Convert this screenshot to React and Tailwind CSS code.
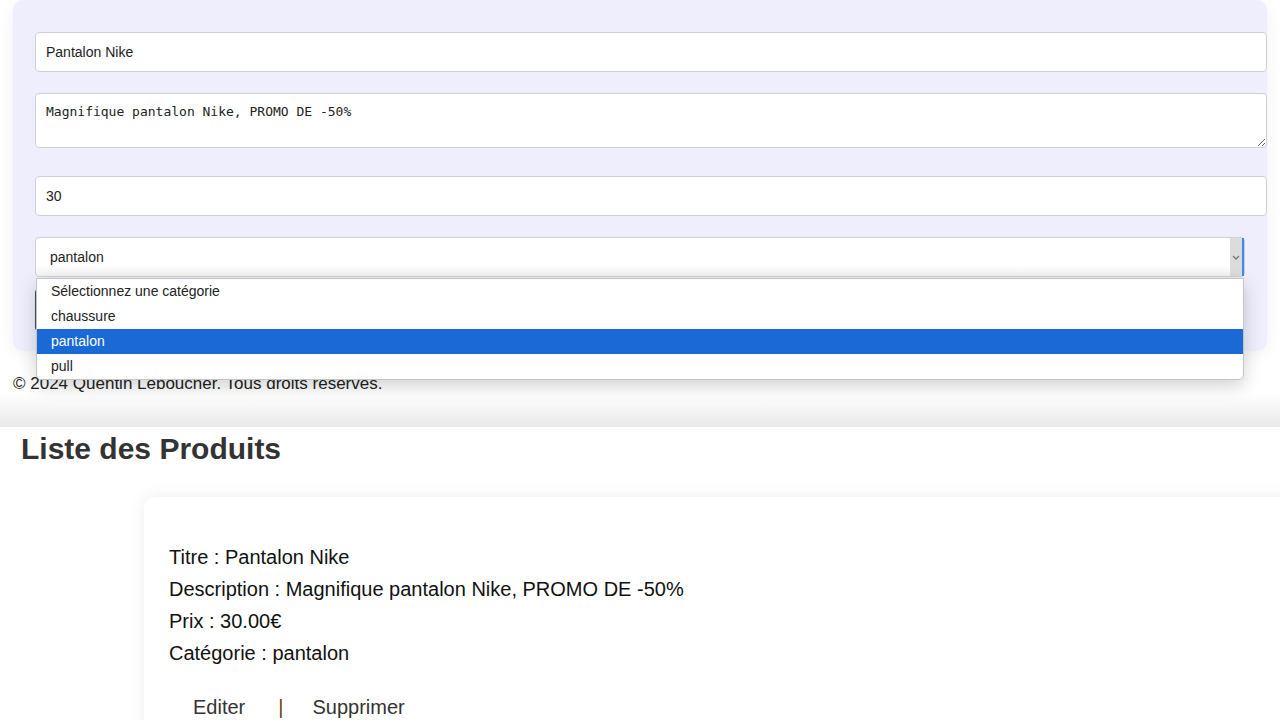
import { useState } from "react";

const categories = ["Sélectionnez une catégorie", "chaussure", "pantalon", "pull"];

export default function App() {
  const [selected] = useState("pantalon");

  return (
    <div className="min-h-screen bg-white font-['Liberation_Sans',Arial,sans-serif] text-[#333]">
      {/* Formulaire */}
      <div className="px-[13px]">
        <div className="bg-[#eeeefc] rounded-[10px] pl-[22px] pr-[22px] pt-[32px] pb-[20px] shadow-[0_4px_16px_rgba(0,0,0,0.06)]">
          <input
            defaultValue="Pantalon Nike"
            className="block w-full box-content h-[38px] px-[10px] border border-[#cfcfd6] rounded-[4px] bg-white text-[14px] text-[#222] outline-none"
          />
          <textarea
            defaultValue="Magnifique pantalon Nike, PROMO DE -50%"
            className="block mt-[21px] w-full box-content h-[33px] px-[10px] py-[10px] border border-[#cfcfd6] rounded-[4px] bg-white font-['DejaVu_Sans_Mono',monospace] text-[13px] leading-[15px] text-[#222] outline-none"
          />
          <input
            defaultValue="30"
            className="block mt-[28px] w-full box-content h-[38px] px-[10px] border border-[#cfcfd6] rounded-[4px] bg-white text-[14px] text-[#222] outline-none"
          />

          {/* Select ouvert */}
          <div className="relative mt-[21px]">
            <div className="flex items-stretch h-[40px] border border-[#cfcfd6] rounded-[4px] bg-gradient-to-b from-white from-70% to-[#f3f3f3]">
              <span className="flex-1 flex items-center pl-[14px] text-[14px] text-[#222]">{selected}</span>
              <span className="w-[14px] flex items-center justify-center bg-[#dcdcdc] border-r-2 border-[#3b8ee8]">
                <svg width="8" height="5" viewBox="0 0 8 5" fill="none">
                  <path d="M1 1l3 3 3-3" stroke="#777" strokeWidth="1.3" />
                </svg>
              </span>
            </div>

            <button className="block mt-[12px] w-[1100px] h-[42px] rounded-[4px] bg-[#3d4f6a] text-white text-[14px]">
              Ajouter
            </button>

            <ul className="absolute left-px right-px top-[41px] z-10 bg-white border border-[#c4c4c4] rounded-b-[5px] shadow-[0_6px_18px_rgba(0,0,0,0.18)] overflow-hidden">
              {categories.map((c) => (
                <li
                  key={c}
                  className={`h-[25px] flex items-center pl-[14px] text-[14px] ${
                    c === selected ? "bg-[#1a69d4] text-white" : "text-[#222]"
                  }`}
                >
                  {c}
                </li>
              ))}
            </ul>
          </div>
        </div>

        <p className="mt-[23px] text-[17px] leading-[20px] text-[#222]">
          © 2024 Quentin Leboucher. Tous droits réservés.
        </p>
      </div>
      <div className="h-[33px] bg-gradient-to-b from-white to-[#e9e9e9]" />

      {/* Liste */}
      <div className="bg-white pt-[4px]">
        <h2 className="pl-[21px] text-[30px] leading-[36px] font-bold text-[#333]">Liste des Produits</h2>

        <div className="mt-[30px] ml-[144px] w-[1200px] bg-white rounded-[10px] shadow-[0_0_18px_rgba(0,0,0,0.07)] pl-[25px] pt-[44px] pb-[20px]">
          <div className="text-[20px] leading-[32px] text-[#111]">
            <p>Titre : Pantalon Nike</p>
            <p>Description : Magnifique pantalon Nike, PROMO DE -50%</p>
            <p>Prix : 30.00€</p>
            <p>Catégorie : pantalon</p>
          </div>
          <div className="mt-[22px] flex items-center text-[20px] leading-[32px] text-[#333]">
            <a className="ml-[24px]">Editer</a>
            <span className="ml-[33px] text-[#6b4312]">|</span>
            <a className="ml-[29px]">Supprimer</a>
          </div>
        </div>
      </div>
    </div>
  );
}
